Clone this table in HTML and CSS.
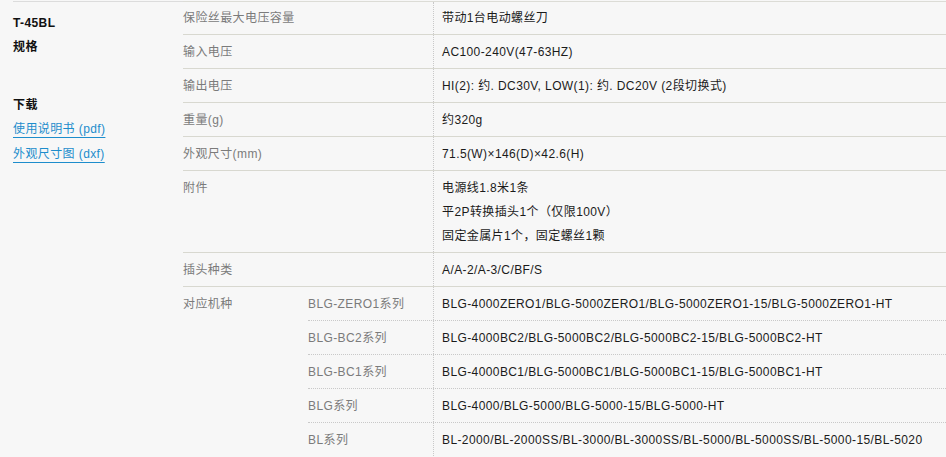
FILE: index.html
```html
<!DOCTYPE html>
<html lang="zh-CN">
<head>
<meta charset="utf-8">
<title>T-45BL 规格</title>
<link rel="stylesheet" href="styles.css">
</head>
<body>
<div class="page">
  <aside class="side">
    <div class="side-title">T-45BL</div>
    <div class="side-title">规格</div>
    <div class="side-title side-dl">下载</div>
    <a class="dl-link" href="#">使用说明书 (pdf)</a>
    <a class="dl-link" href="#">外观尺寸图 (dxf)</a>
  </aside>
  <div class="spec">
    <div class="row row-first">
      <div class="label">保险丝最大电压容量</div>
      <div class="value">带动1台电动螺丝刀</div>
    </div>
    <div class="row">
      <div class="label">输入电压</div>
      <div class="value">AC100-240V(47-63HZ)</div>
    </div>
    <div class="row">
      <div class="label">输出电压</div>
      <div class="value">HI(2): 约. DC30V, LOW(1): 约. DC20V (2段切换式)</div>
    </div>
    <div class="row">
      <div class="label">重量(g)</div>
      <div class="value">约320g</div>
    </div>
    <div class="row">
      <div class="label">外观尺寸(mm)</div>
      <div class="value">71.5(W)×146(D)×42.6(H)</div>
    </div>
    <div class="row">
      <div class="label">附件</div>
      <div class="value">
        <div>电源线1.8米1条</div>
        <div>平2P转换插头1个（仅限100V）</div>
        <div>固定金属片1个，固定螺丝1颗</div>
      </div>
    </div>
    <div class="row">
      <div class="label">插头种类</div>
      <div class="value">A/A-2/A-3/C/BF/S</div>
    </div>
    <div class="row models">
      <div class="label">对应机种</div>
      <div class="subs">
        <div class="subrow">
          <div class="sublabel">BLG-ZERO1系列</div>
          <div class="value">BLG-4000ZERO1/BLG-5000ZERO1/BLG-5000ZERO1-15/BLG-5000ZERO1-HT</div>
        </div>
        <div class="subrow">
          <div class="sublabel">BLG-BC2系列</div>
          <div class="value">BLG-4000BC2/BLG-5000BC2/BLG-5000BC2-15/BLG-5000BC2-HT</div>
        </div>
        <div class="subrow">
          <div class="sublabel">BLG-BC1系列</div>
          <div class="value">BLG-4000BC1/BLG-5000BC1/BLG-5000BC1-15/BLG-5000BC1-HT</div>
        </div>
        <div class="subrow">
          <div class="sublabel">BLG系列</div>
          <div class="value">BLG-4000/BLG-5000/BLG-5000-15/BLG-5000-HT</div>
        </div>
        <div class="subrow">
          <div class="sublabel">BL系列</div>
          <div class="value">BL-2000/BL-2000SS/BL-3000/BL-3000SS/BL-5000/BL-5000SS/BL-5000-15/BL-5020</div>
        </div>
      </div>
    </div>
  </div>
</div>
</body>
</html>
```

FILE: styles.css
```css
html, body {
  margin: 0;
  padding: 0;
  background: #f7f7f7;
}

body {
  font-family: "Liberation Sans", Arial, "Noto Sans CJK SC", sans-serif;
  font-size: 12px;
  letter-spacing: 0.4px;
  color: #1b1b1b;
  overflow: hidden;
}

.page {
  display: grid;
  grid-template-columns: 170px 1fr;
  padding: 1px 0 0 13px;
}

.side {
  border-top: 1px solid #dcdcdc;
  padding-top: 9px;
  display: flex;
  flex-direction: column;
  align-items: flex-start;
}

.side-title {
  font-weight: bold;
  line-height: 24px;
  color: #111;
}

.side-dl {
  margin-top: 34px;
}

.dl-link {
  color: #1d8dcc;
  line-height: 25px;
  text-decoration: underline;
  text-decoration-color: #1d8dcc;
  text-underline-offset: 4px;
}

.spec {
  border-top: 1px solid #dcdcd6;
}

.row {
  display: grid;
  grid-template-columns: 250px 1fr;
  border-bottom: 1px solid #d8d8d0;
}

.row.models {
  grid-template-columns: 125px 1fr;
  border-bottom: none;
}

.label,
.sublabel {
  color: #7b7b7b;
  line-height: 24px;
  padding: 5px 0 4px 0;
}

.value {
  border-left: 1px dotted #c9c9c9;
  line-height: 24px;
  padding: 5px 6px 4px 8px;
  color: #1b1b1b;
  white-space: nowrap;
}

.row-first .label,
.row-first .value {
  padding-top: 4px;
}

.subrow {
  display: grid;
  grid-template-columns: 125px 1fr;
  border-bottom: 1px dotted #c9c9c9;
}

.subrow:last-child {
  border-bottom: none;
}
```
